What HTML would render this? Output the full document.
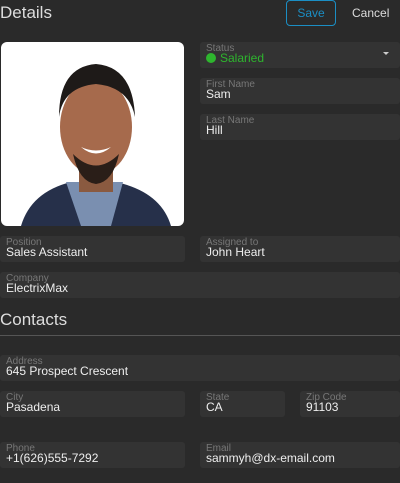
<!DOCTYPE html><html><head><style>
body{margin:0;width:400px;height:483px;background:#2a2a2a;font-family:"Liberation Sans",sans-serif;position:relative;overflow:hidden}
.f{position:absolute;background:#333;border-radius:3px;height:26px}
.f .l{position:absolute;left:6px;top:1px;font-size:10px;color:#777;line-height:11px}
.f .v{position:absolute;left:6px;top:9px;font-size:12px;color:#eee;line-height:14px}
h{position:absolute;color:#ddd;font-size:17px}
</style></head><body>
<h style="left:0;top:3px">Details</h>
<div style="position:absolute;left:286px;top:0;width:48px;height:24px;border:1px solid #1b8ec4;border-radius:4px;color:#1b8ec4;font-size:12px;line-height:24px;text-align:center">Save</div>
<div style="position:absolute;left:352px;top:6px;font-size:12px;color:#ddd">Cancel</div>
<div style="position:absolute;left:1px;top:42px;width:183px;height:184px;background:#fff;border-radius:6px;overflow:hidden">
<svg width="183" height="184" viewBox="0 0 183 184">
<path d="M20 184 Q30 150 70 140 L115 140 Q160 150 170 184Z" fill="#26304a"/>
<path d="M65 140 L80 184 L110 184 L122 140Z" fill="#7a8fb0"/>
<rect x="78" y="120" width="34" height="30" fill="#8a5a40"/>
<ellipse cx="95" cy="85" rx="36" ry="48" fill="#a66a4c"/>
<path d="M58 75 Q58 25 95 22 Q132 25 134 75 Q128 45 95 42 Q62 45 58 75Z" fill="#1e1a18"/>
<path d="M72 112 Q95 135 118 112 Q112 140 95 142 Q78 140 72 112Z" fill="#2a1e18"/>
<path d="M80 105 Q95 118 110 105 Q95 112 80 105Z" fill="#fff"/>
</svg></div>
<div class="f" style="left:200px;top:42px;width:200px"><div class="l">Status</div><div class="v" style="color:#2eb52e;left:6px"><span style="display:inline-block;width:10px;height:10px;border-radius:50%;background:#2eb52e;margin-right:4px;vertical-align:-1px"></span>Salaried</div><div style="position:absolute;right:11px;top:10px;border-left:3px solid transparent;border-right:3px solid transparent;border-top:3px solid #ccc"></div></div>
<div class="f" style="left:200px;top:78px;width:200px"><div class="l">First Name</div><div class="v">Sam</div></div>
<div class="f" style="left:200px;top:114px;width:200px"><div class="l">Last Name</div><div class="v">Hill</div></div>
<div class="f" style="left:0;top:236px;width:185px"><div class="l">Position</div><div class="v">Sales Assistant</div></div>
<div class="f" style="left:200px;top:236px;width:200px"><div class="l">Assigned to</div><div class="v">John Heart</div></div>
<div class="f" style="left:0;top:272px;width:400px"><div class="l">Company</div><div class="v">ElectrixMax</div></div>
<h style="left:0;top:310px">Contacts</h>
<div style="position:absolute;left:0;top:335px;width:400px;height:1px;background:#555"></div>
<div class="f" style="left:0;top:355px;width:400px"><div class="l">Address</div><div class="v">645 Prospect Crescent</div></div>
<div class="f" style="left:0;top:391px;width:185px"><div class="l">City</div><div class="v">Pasadena</div></div>
<div class="f" style="left:200px;top:391px;width:85px"><div class="l">State</div><div class="v">CA</div></div>
<div class="f" style="left:300px;top:391px;width:100px"><div class="l">Zip Code</div><div class="v">91103</div></div>
<div class="f" style="left:0;top:442px;width:185px"><div class="l">Phone</div><div class="v">+1(626)555-7292</div></div>
<div class="f" style="left:200px;top:442px;width:200px"><div class="l">Email</div><div class="v">sammyh@dx-email.com</div></div>
</body></html>
